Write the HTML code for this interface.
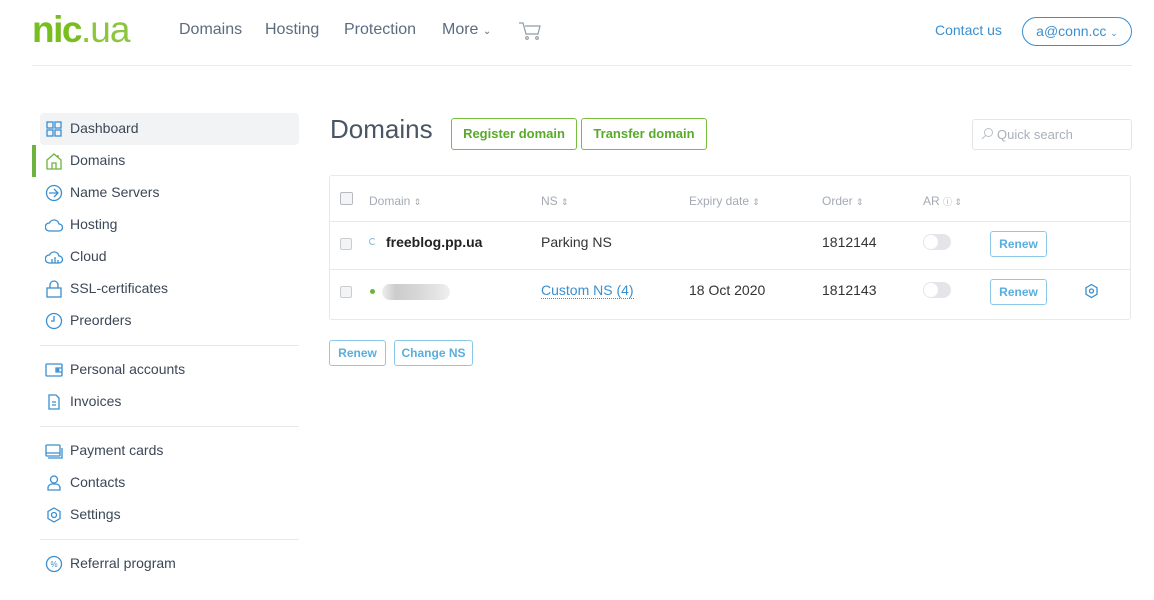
<!DOCTYPE html>
<html><head><meta charset="utf-8"><style>
*{box-sizing:border-box;margin:0;padding:0}
body{width:1154px;height:600px;background:#fff;font-family:"Liberation Sans",sans-serif;position:relative;overflow:hidden;color:#2f3a48}
.a{position:absolute;white-space:nowrap}
.nav{font-size:16px;color:#5c6c7f;top:21px}
.side{font-size:14px;color:#3b4756;left:70px}
.ic{position:absolute;left:45px;width:18px;height:18px}
.hr{position:absolute;left:40px;width:259px;height:1px;background:#e6e9ec}
.th{font-size:12px;color:#a3aab3;top:194px}
.th span{font-size:9px}
.cb{position:absolute;left:340px;width:12px;height:12px;border:1px solid #c9cdd2;border-radius:2px;background:#f3f4f5}
.btn{position:absolute;border:1px solid #8cc9e9;border-radius:3px;color:#5aaede;font-size:12px;font-weight:bold;text-align:center}
.tg{position:absolute;left:923px;width:28px;height:16px;border-radius:8px;background:#e3e5e8}
.tg:after{content:"";position:absolute;left:1px;top:1px;width:14px;height:14px;border-radius:50%;background:#fff}
</style></head><body>
<div class="a" style="left:32px;top:9px;font-size:37px;font-weight:bold;letter-spacing:-1.5px;color:#78be20">nic<span style="font-weight:normal;color:#8cc63f;letter-spacing:-1px">.ua</span></div>
<div class="a nav" style="left:179px">Domains</div>
<div class="a nav" style="left:265px">Hosting</div>
<div class="a nav" style="left:344px">Protection</div>
<div class="a nav" style="left:442px">More <span style="font-size:10px">&#8964;</span></div>
<svg class="a" style="left:518px;top:21px" width="24" height="20" viewBox="0 0 24 20" fill="none" stroke="#8e9aa7" stroke-width="1.2"><path d="M1 2h4l3 11h12l2-8H7"/><circle cx="9" cy="17" r="1.3"/><circle cx="19" cy="17" r="1.3"/></svg>
<div class="a" style="left:935px;top:22px;font-size:14px;color:#3a8fd0">Contact us</div>
<div class="a" style="left:1022px;top:17px;width:110px;height:29px;border:1.5px solid #3a8fd0;border-radius:15px;font-size:14px;color:#3a8fd0;text-align:center;line-height:26px">a@conn.cc <span style="font-size:9px">&#8964;</span></div>
<div class="a" style="left:32px;top:65px;width:1100px;height:1px;background:#e8eaec"></div>

<div class="a" style="left:40px;top:113px;width:259px;height:32px;background:#f2f3f5;border-radius:4px"></div>
<div class="a" style="left:32px;top:145px;width:4px;height:32px;background:#6cb33f"></div>
<svg class="ic" style="top:120px" viewBox="0 0 18 18" fill="none" stroke="#3a8fd0" stroke-width="1.3"><rect x="2" y="2" width="6" height="6"/><rect x="10" y="2" width="6" height="6"/><rect x="2" y="10" width="6" height="6"/><rect x="10" y="10" width="6" height="6"/></svg>
<div class="a side" style="top:120px">Dashboard</div>
<svg class="ic" style="top:152px" viewBox="0 0 18 18" fill="none" stroke="#6cb33f" stroke-width="1.3"><path d="M2 8l7-6 7 6v9H2z M7 17v-6h4v6 M13 3v3"/></svg>
<div class="a side" style="top:152px">Domains</div>
<svg class="ic" style="top:184px" viewBox="0 0 18 18" fill="none" stroke="#3a8fd0" stroke-width="1.3"><circle cx="9" cy="9" r="7.5"/><path d="M4 9h9M9 5l4 4-4 4"/></svg>
<div class="a side" style="top:184px">Name Servers</div>
<svg class="ic" style="top:216px" viewBox="0 0 18 18" fill="none" stroke="#3a8fd0" stroke-width="1.3"><path d="M4 15h10a3.5 3.5 0 0 0 0-7 5 5 0 0 0-9.5-1A4 4 0 0 0 4 15z"/></svg>
<div class="a side" style="top:216px">Hosting</div>
<svg class="ic" style="top:248px" viewBox="0 0 18 18" fill="none" stroke="#3a8fd0" stroke-width="1.3"><path d="M4 15h10a3.5 3.5 0 0 0 0-7 5 5 0 0 0-9.5-1A4 4 0 0 0 4 15z M7 15v-4M10 15V9M13 15v-3"/></svg>
<div class="a side" style="top:248px">Cloud</div>
<svg class="ic" style="top:280px" viewBox="0 0 18 18" fill="none" stroke="#3a8fd0" stroke-width="1.3"><rect x="2" y="8" width="14" height="9"/><path d="M5 8V5a4 4 0 0 1 8 0v3"/></svg>
<div class="a side" style="top:280px">SSL-certificates</div>
<svg class="ic" style="top:312px" viewBox="0 0 18 18" fill="none" stroke="#3a8fd0" stroke-width="1.3"><circle cx="9" cy="9" r="7.5"/><path d="M9 4v5H6"/></svg>
<div class="a side" style="top:312px">Preorders</div>
<div class="hr" style="top:345px"></div>
<svg class="ic" style="top:361px" viewBox="0 0 18 18" fill="none" stroke="#3a8fd0" stroke-width="1.3"><rect x="1" y="3" width="16" height="12" rx="1"/><path d="M17 7h-6v4h6"/><circle cx="13" cy="9" r="0.8"/></svg>
<div class="a side" style="top:361px">Personal accounts</div>
<svg class="ic" style="top:393px" viewBox="0 0 18 18" fill="none" stroke="#3a8fd0" stroke-width="1.3"><path d="M4 2h7l3 3v11H4z M7 9h4M7 12h4"/></svg>
<div class="a side" style="top:393px">Invoices</div>
<div class="hr" style="top:426px"></div>
<svg class="ic" style="top:442px" viewBox="0 0 18 18" fill="none" stroke="#3a8fd0" stroke-width="1.3"><rect x="1" y="3" width="14" height="11" rx="1"/><path d="M3 16h14V6M1 11h14"/></svg>
<div class="a side" style="top:442px">Payment cards</div>
<svg class="ic" style="top:474px" viewBox="0 0 18 18" fill="none" stroke="#3a8fd0" stroke-width="1.3"><circle cx="9" cy="5.5" r="3.5"/><path d="M3 16v-2a4 4 0 0 1 4-4h4a4 4 0 0 1 4 4v2z"/></svg>
<div class="a side" style="top:474px">Contacts</div>
<svg class="ic" style="top:506px" viewBox="0 0 18 18" fill="none" stroke="#3a8fd0" stroke-width="1.3"><path d="M9 2l6 3.5v7L9 16l-6-3.5v-7z"/><circle cx="9" cy="9" r="2.5"/></svg>
<div class="a side" style="top:506px">Settings</div>
<div class="hr" style="top:539px"></div>
<svg class="ic" style="top:555px" viewBox="0 0 18 18" fill="none" stroke="#3a8fd0" stroke-width="1.3"><circle cx="9" cy="9" r="7.5"/><text x="9" y="12" font-size="8" text-anchor="middle" fill="#3a8fd0" stroke="none" font-family="Liberation Sans">%</text></svg>
<div class="a side" style="top:555px">Referral program</div>

<div class="a" style="left:330px;top:114px;font-size:26px;font-weight:300;color:#4a5665">Domains</div>
<div class="a" style="left:451px;top:118px;width:126px;height:32px;border:1px solid #78be3f;border-radius:3px;color:#5aaa2a;font-size:13px;font-weight:bold;text-align:center;line-height:30px">Register domain</div>
<div class="a" style="left:581px;top:118px;width:126px;height:32px;border:1px solid #78be3f;border-radius:3px;color:#5aaa2a;font-size:13px;font-weight:bold;text-align:center;line-height:30px">Transfer domain</div>
<div class="a" style="left:972px;top:119px;width:160px;height:31px;border:1px solid #e3e6e9;border-radius:3px;font-size:13px;color:#a8b0b9;line-height:29px;padding-left:24px">Quick search</div>
<svg class="a" style="left:981px;top:127px" width="13" height="13" viewBox="0 0 13 13" fill="none" stroke="#b8bfc7" stroke-width="1"><circle cx="7.5" cy="5.5" r="4"/><path d="M4.5 8.5L1 12"/></svg>

<div class="a" style="left:329px;top:175px;width:802px;height:145px;border:1px solid #e6e9ec;border-radius:3px"></div>
<div class="a" style="left:330px;top:221px;width:800px;height:1px;background:#e6e9ec"></div>
<div class="a" style="left:330px;top:269px;width:800px;height:1px;background:#e6e9ec"></div>
<div class="cb" style="top:192px;width:13px;height:13px;border-color:#b5bac0"></div>
<div class="a th" style="left:369px">Domain <span>⇕</span></div>
<div class="a th" style="left:541px">NS <span>⇕</span></div>
<div class="a th" style="left:689px">Expiry date <span>⇕</span></div>
<div class="a th" style="left:822px">Order <span>⇕</span></div>
<div class="a th" style="left:923px">AR <span>ⓘ ⇕</span></div>

<div class="cb" style="top:238px"></div>
<div class="a" style="left:369px;top:238px;width:7px;height:7px;border:1.5px solid #7cc0e8;border-right-color:transparent;border-radius:50%"></div>
<div class="a" style="left:386px;top:234px;font-size:14px;font-weight:bold;color:#222">freeblog.pp.ua</div>
<div class="a" style="left:541px;top:234px;font-size:14px;color:#333">Parking NS</div>
<div class="a" style="left:822px;top:234px;font-size:14px;color:#333">1812144</div>
<div class="tg" style="top:234px"></div>
<div class="btn" style="left:990px;top:231px;width:57px;height:26px;line-height:24px">Renew</div>

<div class="cb" style="top:286px"></div>
<div class="a" style="left:370px;top:289px;width:5px;height:5px;border-radius:50%;background:#6cb33f"></div>
<div class="a" style="left:382px;top:284px;width:68px;height:16px;border-radius:8px;background:linear-gradient(90deg,#eee,#ccc 20%,#d6d6d6 50%,#e4e4e4 80%,#f0f0f0)"></div>
<div class="a" style="left:541px;top:282px;font-size:14px;color:#3a8fd0;border-bottom:1px dotted #3a8fd0">Custom NS (4)</div>
<div class="a" style="left:689px;top:282px;font-size:14px;color:#333">18 Oct 2020</div>
<div class="a" style="left:822px;top:282px;font-size:14px;color:#333">1812143</div>
<div class="tg" style="top:282px"></div>
<div class="btn" style="left:990px;top:279px;width:57px;height:26px;line-height:24px">Renew</div>
<svg class="a" style="left:1084px;top:283px" width="15" height="16" viewBox="0 0 15 16" fill="none" stroke="#3a8fd0" stroke-width="1.3"><path d="M7.5 1.5l5.5 3.2v6.6l-5.5 3.2-5.5-3.2V4.7z"/><circle cx="7.5" cy="8" r="2"/></svg>

<div class="btn" style="left:329px;top:340px;width:57px;height:26px;line-height:24px">Renew</div>
<div class="btn" style="left:394px;top:340px;width:79px;height:26px;line-height:24px">Change NS</div>
</body></html>
